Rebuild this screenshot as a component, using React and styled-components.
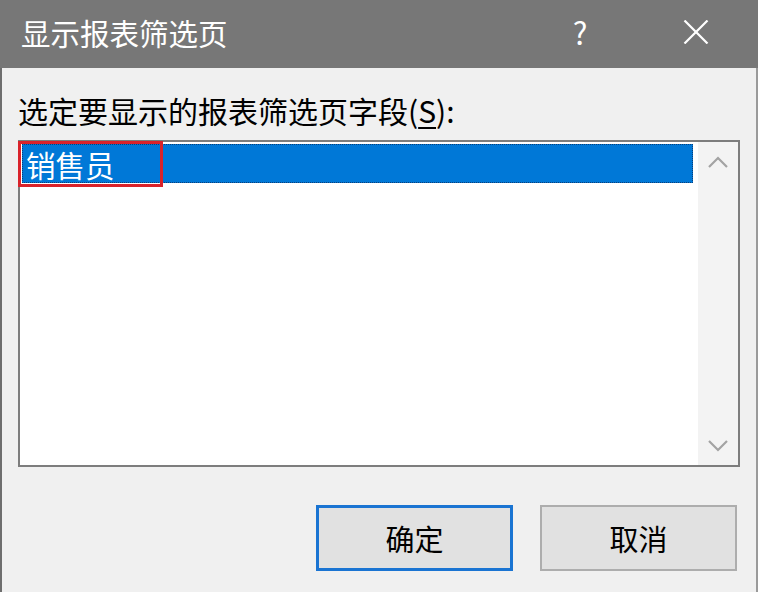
import styled, { createGlobalStyle } from 'styled-components';

const GlobalStyle = createGlobalStyle`
  html, body {
    margin: 0;
    padding: 0;
    background: #f0f0f0;
    overflow: hidden;
  }
  * {
    box-sizing: border-box;
  }
`;

const FONT = `"Noto Sans CJK SC", "Microsoft YaHei", "Noto Sans", sans-serif`;

const Dialog = styled.div`
  width: 758px;
  height: 592px;
  display: flex;
  flex-direction: column;
  background: #f0f0f0;
  border-left: 2px solid #6e6e6e;
  border-right: 2px solid #9a9a9a;
  font-family: ${FONT};
  color: #000;
`;

const TitleBar = styled.div`
  height: 68px;
  flex: none;
  display: flex;
  align-items: center;
  background: #777777;
  margin: 0 -2px;
  padding-left: 21px;
`;

const Title = styled.div`
  flex: 1;
  font-size: 29.5px;
  line-height: 36px;
  color: #fff;
  margin-top: -4px;
`;

const HelpButton = styled.div`
  width: 40px;
  text-align: center;
  font-size: 31px;
  font-weight: 400;
  line-height: 36px;
  color: #fff;
  margin-right: 83px;
  margin-top: -4px;
`;

const CloseButton = styled.div`
  width: 26px;
  height: 24px;
  margin-right: 49px;
  margin-top: -4px;
  display: flex;
`;

const Body = styled.div`
  flex: 1;
  display: flex;
  flex-direction: column;
  padding: 24px 16px 0 16px;
`;

const Label = styled.div`
  font-size: 30px;
  line-height: 36px;
  height: 36px;
  margin-bottom: 12px;

  u {
    text-decoration-thickness: 2px;
    text-underline-offset: 4px;
  }
`;

const ListBox = styled.div`
  height: 327px;
  display: flex;
  background: #fff;
  border: 2px solid #7d7d7d;
`;

const Items = styled.div`
  flex: 1;
  padding: 2px 5px 0 2px;
`;

const Item = styled.div`
  position: relative;
  height: 39px;
  display: flex;
  align-items: center;
  padding-left: 4px;
  font-size: 29.5px;
  color: ${(p) => (p.selected ? '#fff' : '#000')};
  background: ${(p) => (p.selected ? '#0078d7' : 'transparent')};
  outline: ${(p) => (p.selected ? '1px dotted #0a3f7a' : 'none')};
  outline-offset: -1px;
`;

const Highlight = styled.div`
  position: absolute;
  left: -4px;
  top: -3px;
  width: 145px;
  height: 46px;
  border: 3px solid #d9232b;
  pointer-events: none;
`;

const ScrollBar = styled.div`
  width: 40px;
  flex: none;
  background: #f3f3f3;
  display: flex;
  flex-direction: column;
  justify-content: space-between;
  align-items: center;
  padding: 14px 0 13px;
`;

const Arrow = styled.svg`
  width: 20px;
  height: 12px;
  display: block;
`;

const ButtonRow = styled.div`
  display: flex;
  justify-content: flex-end;
  gap: 27px;
  margin-top: 38px;
  padding-right: 3px;
`;

const Button = styled.button`
  width: 197px;
  height: 66px;
  background: #e1e1e1;
  border: ${(p) => (p.primary ? '3px solid #1a74d2' : '2px solid #adadad')};
  font-family: ${FONT};
  font-size: 29px;
  color: #000;
  padding: 0;
  cursor: pointer;
`;

export default function App() {
  return (
    <>
      <GlobalStyle />
      <Dialog>
        <TitleBar>
          <Title>显示报表筛选页</Title>
          <HelpButton>?</HelpButton>
          <CloseButton>
            <svg width="26" height="24" viewBox="0 0 26 24">
              <path d="M1.5 0.5 L24.5 23.5 M24.5 0.5 L1.5 23.5" stroke="#fff" strokeWidth="2.2" fill="none" />
            </svg>
          </CloseButton>
        </TitleBar>
        <Body>
          <Label>
            选定要显示的报表筛选页字段(<u>S</u>):
          </Label>
          <ListBox>
            <Items>
              <Item selected>
                销售员
                <Highlight />
              </Item>
            </Items>
            <ScrollBar>
              <Arrow viewBox="0 0 20 12">
                <path d="M1 11 L10 2 L19 11" stroke="#a3a3a3" strokeWidth="2.2" fill="none" />
              </Arrow>
              <Arrow viewBox="0 0 20 12">
                <path d="M1 1 L10 10 L19 1" stroke="#a3a3a3" strokeWidth="2.2" fill="none" />
              </Arrow>
            </ScrollBar>
          </ListBox>
          <ButtonRow>
            <Button primary>确定</Button>
            <Button>取消</Button>
          </ButtonRow>
        </Body>
      </Dialog>
    </>
  );
}
